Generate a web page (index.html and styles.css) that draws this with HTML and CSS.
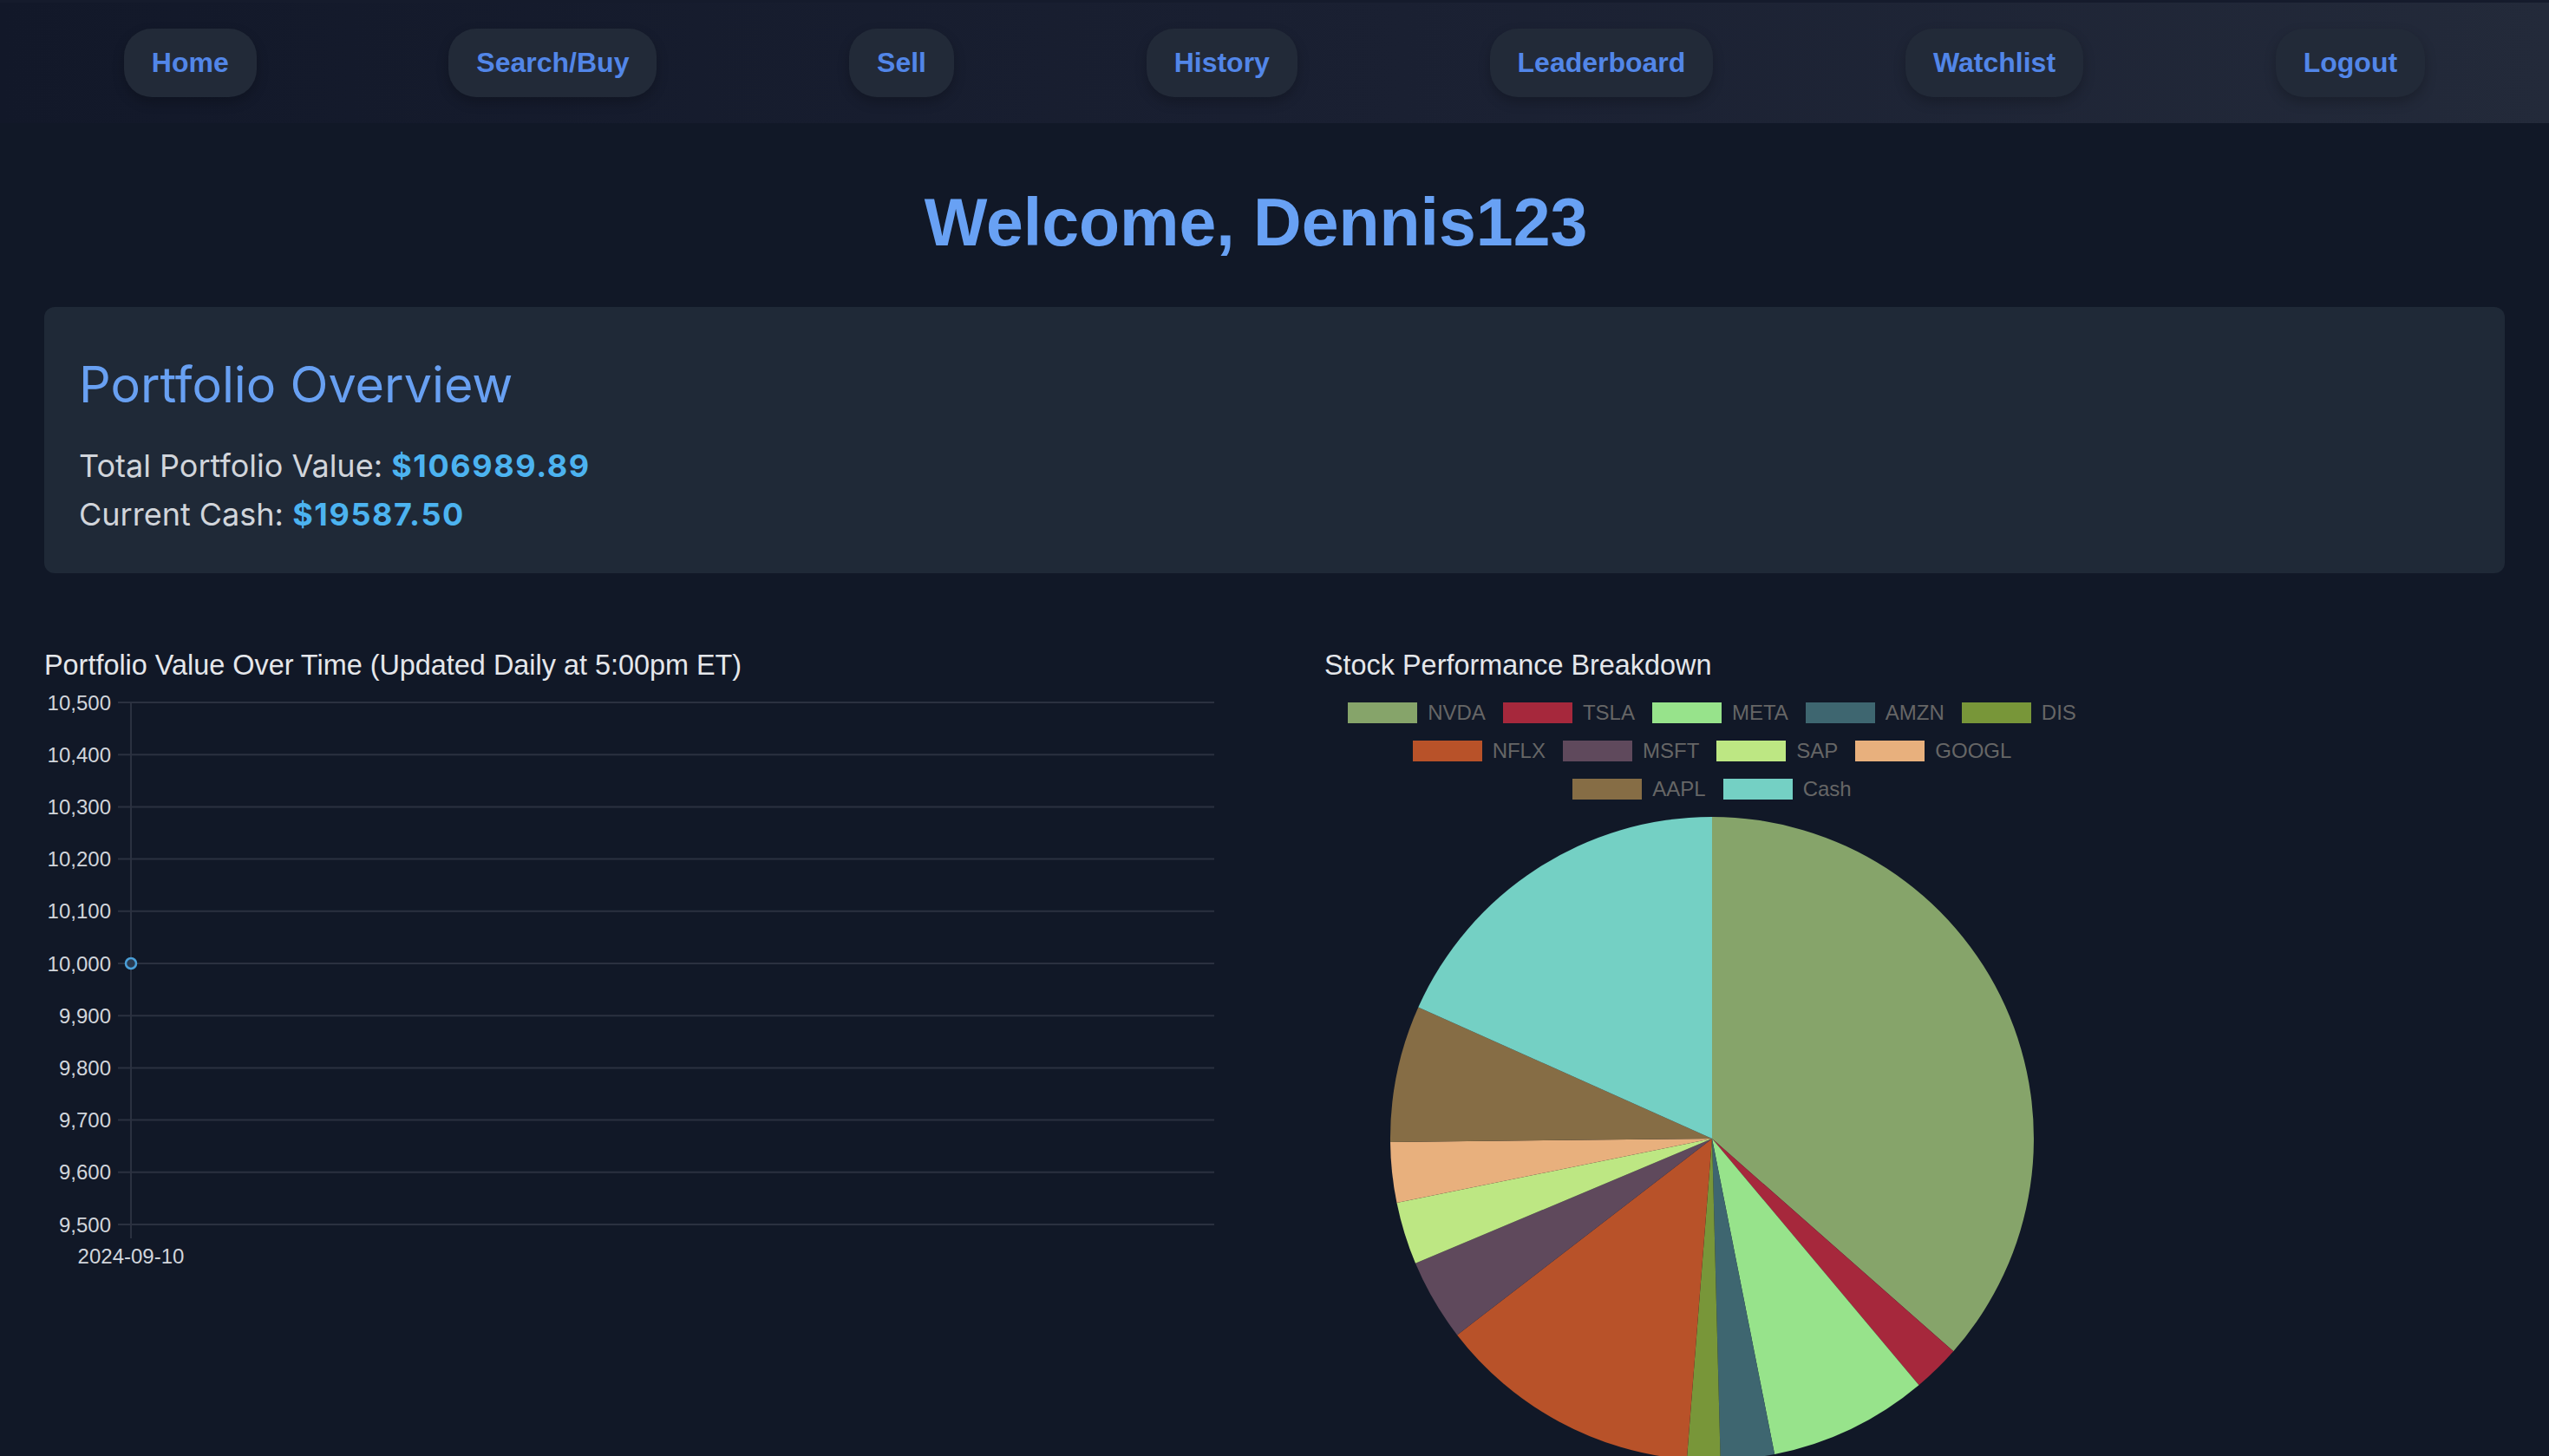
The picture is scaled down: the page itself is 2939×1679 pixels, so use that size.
FILE: index.html
```html
<!DOCTYPE html>
<html lang="en">
<head>
<meta charset="utf-8">
<title>Dashboard</title>
<link rel="stylesheet" href="styles.css">
</head>
<body>
<nav class="nav">
  <a class="pill" href="#">Home</a>
  <a class="pill" href="#">Search/Buy</a>
  <a class="pill" href="#">Sell</a>
  <a class="pill" href="#">History</a>
  <a class="pill" href="#">Leaderboard</a>
  <a class="pill" href="#">Watchlist</a>
  <a class="pill" href="#">Logout</a>
</nav>

<h1 class="welcome">Welcome, Dennis123</h1>

<section class="card">
  <h2 class="card-title">Portfolio Overview</h2>
  <p class="stat">Total Portfolio Value: <strong class="val">$106989.89</strong></p>
  <p class="stat">Current Cash: <strong class="val">$19587.50</strong></p>
</section>

<section class="charts">
  <div class="chart chart-line">
    <div class="chart-title">Portfolio Value Over Time (Updated Daily at 5:00pm ET)</div>
    <svg class="line-svg" width="1360" height="700" viewBox="0 0 1360 700">
      <g class="grid">
        <line x1="85" y1="23" x2="1349" y2="23"/>
        <line x1="85" y1="83.2" x2="1349" y2="83.2"/>
        <line x1="85" y1="143.4" x2="1349" y2="143.4"/>
        <line x1="85" y1="203.6" x2="1349" y2="203.6"/>
        <line x1="85" y1="263.8" x2="1349" y2="263.8"/>
        <line x1="85" y1="324" x2="1349" y2="324"/>
        <line x1="85" y1="384.2" x2="1349" y2="384.2"/>
        <line x1="85" y1="444.4" x2="1349" y2="444.4"/>
        <line x1="85" y1="504.6" x2="1349" y2="504.6"/>
        <line x1="85" y1="564.8" x2="1349" y2="564.8"/>
        <line x1="85" y1="625" x2="1349" y2="625"/>
        <line x1="100" y1="23" x2="100" y2="641"/>
      </g>
      <g class="ticks">
        <text x="77" y="31.5">10,500</text>
        <text x="77" y="91.7">10,400</text>
        <text x="77" y="151.9">10,300</text>
        <text x="77" y="212.1">10,200</text>
        <text x="77" y="272.3">10,100</text>
        <text x="77" y="332.5">10,000</text>
        <text x="77" y="392.7">9,900</text>
        <text x="77" y="452.9">9,800</text>
        <text x="77" y="513.1">9,700</text>
        <text x="77" y="573.3">9,600</text>
        <text x="77" y="633.5">9,500</text>
      </g>
      <text class="xtick" x="100" y="670">2024-09-10</text>
      <circle class="point" cx="100" cy="324" r="6"/>
    </svg>
  </div>

  <div class="chart chart-pie">
    <div class="chart-title">Stock Performance Breakdown</div>
    <div class="legend">
      <div class="legend-row">
        <span class="item"><i class="box c-nvda"></i>NVDA</span>
        <span class="item"><i class="box c-tsla"></i>TSLA</span>
        <span class="item"><i class="box c-meta"></i>META</span>
        <span class="item"><i class="box c-amzn"></i>AMZN</span>
        <span class="item"><i class="box c-dis"></i>DIS</span>
      </div>
      <div class="legend-row">
        <span class="item"><i class="box c-nflx"></i>NFLX</span>
        <span class="item"><i class="box c-msft"></i>MSFT</span>
        <span class="item"><i class="box c-sap"></i>SAP</span>
        <span class="item"><i class="box c-googl"></i>GOOGL</span>
      </div>
      <div class="legend-row">
        <span class="item"><i class="box c-aapl"></i>AAPL</span>
        <span class="item"><i class="box c-cash"></i>Cash</span>
      </div>
    </div>
    <svg class="pie-svg" width="894" height="758" viewBox="0 0 894 758">
      <path fill="#86a46a" d="M447 391 L447 20 A371 371 0 0 1 725.3 636.3 Z"/>
      <path fill="#a6283c" d="M447 391 L725.3 636.3 A371 371 0 0 1 685.5 675.2 Z"/>
      <path fill="#97e38b" d="M447 391 L685.5 675.2 A371 371 0 0 1 519.1 755.0 Z"/>
      <path fill="#3e6670" d="M447 391 L519.1 755.0 A371 371 0 0 1 456.7 761.9 Z"/>
      <path fill="#789639" d="M447 391 L456.7 761.9 A371 371 0 0 1 417.9 760.9 Z"/>
      <path fill="#b85229" d="M447 391 L417.9 760.9 A371 371 0 0 1 153.1 617.4 Z"/>
      <path fill="#5f495c" d="M447 391 L153.1 617.4 A371 371 0 0 1 105.0 534.8 Z"/>
      <path fill="#bde783" d="M447 391 L105.0 534.8 A371 371 0 0 1 83.5 465.0 Z"/>
      <path fill="#e8b07d" d="M447 391 L83.5 465.0 A371 371 0 0 1 76.0 394.9 Z"/>
      <path fill="#866d45" d="M447 391 L76.0 394.9 A371 371 0 0 1 108.3 239.5 Z"/>
      <path fill="#74d0c4" d="M447 391 L108.3 239.5 A371 371 0 0 1 447 20 Z"/>
    </svg>
  </div>
</section>
</body>
</html>
```

FILE: styles.css
```css
html {
  overflow: hidden;
}

body {
  margin: 0;
  background: #111827;
  font-family: Inter, "Liberation Sans", Arial, sans-serif;
  color: #d1d5db;
}

.nav {
  height: 142px;
  box-sizing: border-box;
  display: flex;
  align-items: center;
  justify-content: space-around;
  padding: 0 32px;
  background: linear-gradient(90deg, #121829 0%, #1a2032 55%, #232a3a 100%);
  border-top: 3px solid #151b2c;
}

.pill {
  display: block;
  padding: 21px 32px;
  line-height: 37px;
  border-radius: 32px;
  background: #222a38;
  box-shadow: 0 6px 14px rgba(0, 0, 0, 0.22);
  color: #5286e8;
  font-family: "Liberation Sans", Arial, Helvetica, sans-serif;
  font-weight: 700;
  font-size: 32px;
  text-decoration: none;
}

.welcome {
  margin: 69px 0 53px;
  padding-right: 43px;
  text-align: center;
  font-family: "Liberation Sans", Arial, Helvetica, sans-serif;
  font-weight: 700;
  font-size: 77px;
  line-height: 90px;
  color: #68a1f4;
}

.card {
  margin: 0 51px;
  padding: 40px;
  background: #1f2937;
  border-radius: 12px;
}

.card-title {
  margin: 7px 0 24px;
  font-weight: 400;
  font-size: 57.5px;
  line-height: 84px;
  color: #68a0f2;
}

.stat {
  margin: 0;
  font-size: 36px;
  line-height: 56px;
  color: #d1d5db;
}

.val {
  font-weight: 700;
  letter-spacing: 1.6px;
  color: #4cb3f0;
}

.charts {
  display: flex;
  gap: 116px;
  margin-top: 80px;
  padding: 0 51px;
  align-items: flex-start;
}

.chart-line {
  width: 1360px;
}

.chart-pie {
  width: 894px;
}

.chart-title {
  padding-top: 6px;
  height: 40px;
  line-height: 40px;
  font-family: "Liberation Sans", Arial, Helvetica, sans-serif;
  font-size: 32.4px;
  color: #e5e7eb;
  white-space: nowrap;
}

.line-svg,
.pie-svg {
  display: block;
}

.grid line {
  stroke: #2b3140;
  stroke-width: 2;
}

.ticks text {
  font-family: "Liberation Sans", Arial, Helvetica, sans-serif;
  font-size: 24px;
  fill: #d1d5db;
  text-anchor: end;
}

.xtick {
  font-family: "Liberation Sans", Arial, Helvetica, sans-serif;
  font-size: 24px;
  fill: #d1d5db;
  text-anchor: middle;
}

.point {
  fill: #2a3a50;
  stroke: #4a9fd8;
  stroke-width: 2.5;
}

.legend {
  margin-top: 23px;
  display: flex;
  flex-direction: column;
  gap: 20px;
}

.legend-row {
  display: flex;
  justify-content: center;
  gap: 20px;
  height: 24px;
}

.item {
  display: flex;
  align-items: center;
  font-family: "Liberation Sans", Arial, Helvetica, sans-serif;
  font-size: 24px;
  line-height: 24px;
  color: #666666;
}

.box {
  display: block;
  width: 80px;
  height: 24px;
  margin-right: 12px;
}

.c-nvda { background: #86a46a; }
.c-tsla { background: #a6283c; }
.c-meta { background: #97e38b; }
.c-amzn { background: #3e6670; }
.c-dis { background: #789639; }
.c-nflx { background: #b85229; }
.c-msft { background: #5f495c; }
.c-sap { background: #bde783; }
.c-googl { background: #e8b07d; }
.c-aapl { background: #866d45; }
.c-cash { background: #74d0c4; }
```
